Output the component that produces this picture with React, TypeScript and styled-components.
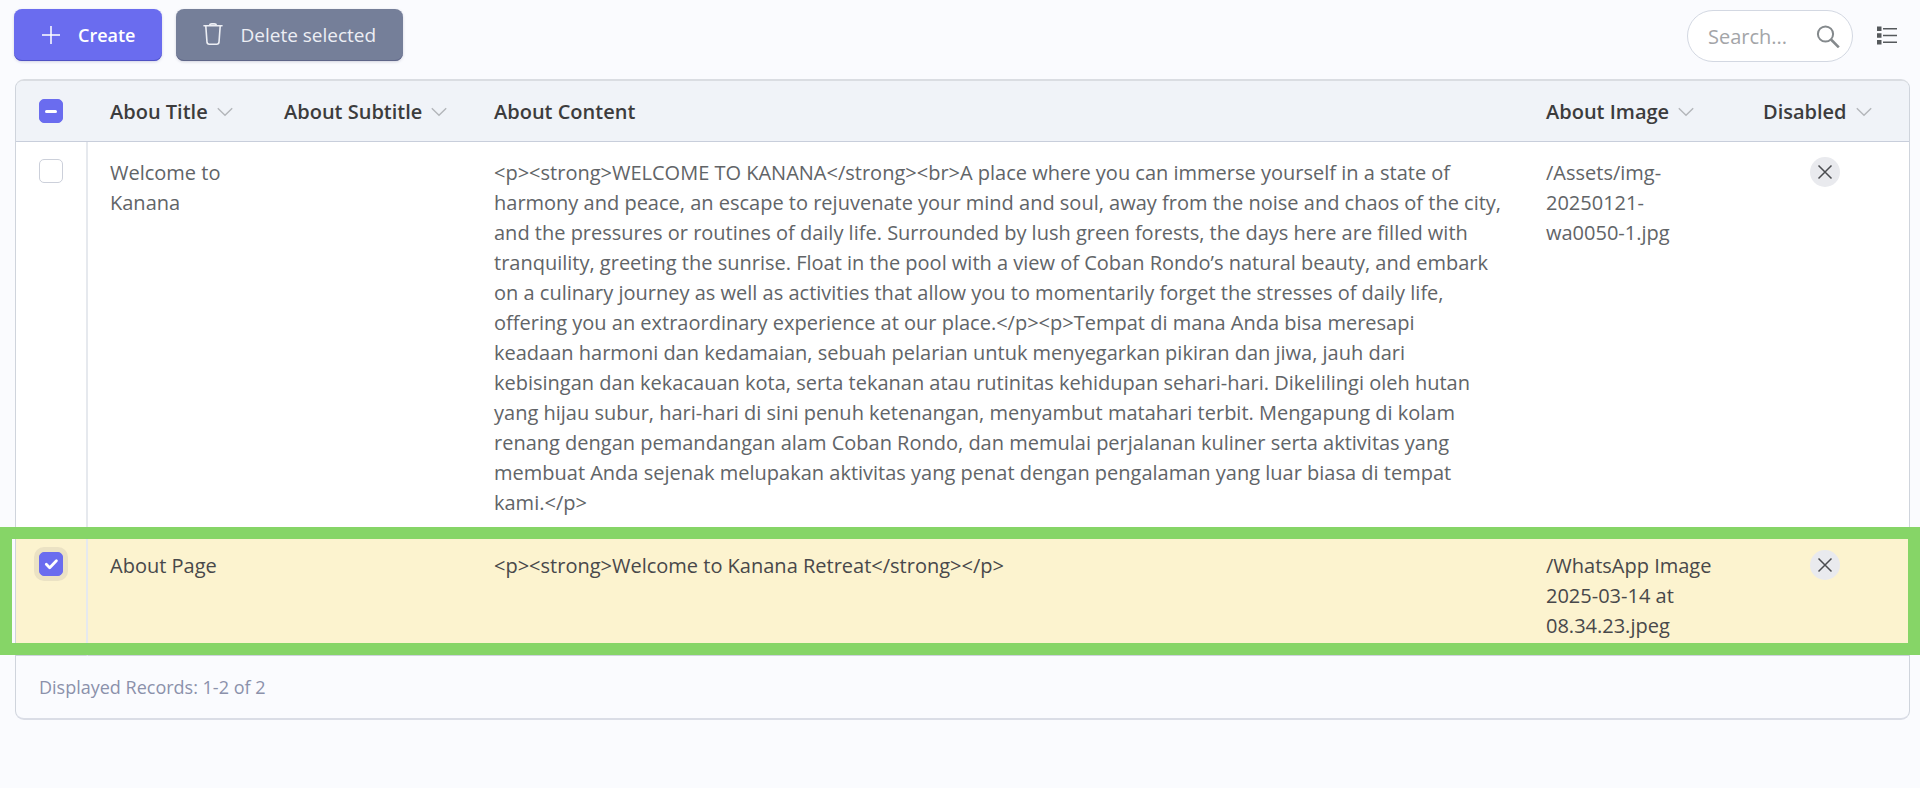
import React, { useState } from "react";
import styled, { createGlobalStyle, css } from "styled-components";

const GlobalStyle = createGlobalStyle`
  *, *::before, *::after { box-sizing: border-box; }
  body {
    margin: 0;
    background: #fafbfe;
    color: #616467;
    font-family: "Open Sans", "Noto Sans", sans-serif;
    font-size: 20px;
    line-height: 30px;
  }
  button, input { font: inherit; }
`;

const Page = styled.main`
  padding: 9px 10px 68px 14px;
  overflow-x: hidden;
`;

const Toolbar = styled.header`
  display: flex;
  align-items: flex-start;
  justify-content: space-between;
  margin-bottom: 17px;
`;

const Actions = styled.div`
  display: flex;
  gap: 14px;
`;

const ActionButton = styled.button<{ $tone: "primary" | "muted" }>`
  display: flex;
  align-items: center;
  gap: 17px;
  height: 52px;
  padding: 0 27px;
  border: 0;
  border-radius: 8px;
  white-space: nowrap;
  cursor: pointer;
  ${({ $tone }) =>
    $tone === "primary"
      ? css`
          background: #6a6cef;
          color: #fff;
          font-weight: 600;
          font-size: 18px;
          box-shadow: inset 0 -1px 0 #5052c4, 0 1px 3px rgba(60, 60, 140, 0.2);
        `
      : css`
          background: #757f99;
          color: #eceef4;
          font-size: 19px;
          box-shadow: inset 0 -1px 0 #5f6688, 0 1px 3px rgba(60, 60, 100, 0.2);
        `}
`;

const Tools = styled.div`
  display: flex;
  align-items: center;
  gap: 18px;
  padding: 1px 7px 0 0;
`;

const SearchBox = styled.label`
  display: flex;
  align-items: center;
  width: 166px;
  height: 52px;
  padding: 0 12px 0 20px;
  border: 1px solid #d3d8e2;
  border-radius: 26px;
  background: #fff;
  color: #84898c;
`;

const SearchInput = styled.input`
  flex: 1;
  min-width: 0;
  padding: 2px 0 0;
  border: 0;
  outline: 0;
  background: transparent;
  color: #616467;
  &::placeholder {
    color: #a3a5a8;
    opacity: 1;
  }
`;

const IconButton = styled.button`
  display: flex;
  padding: 6px;
  border: 0;
  background: transparent;
  color: #55595c;
  cursor: pointer;
`;

const Grid = styled.section`
  margin-left: 1px;
  border: 1px solid #cfd4dc;
  border-width: 2px 1px;
  border-top-color: #dadde2;
  border-bottom-color: #dadde6;
  border-radius: 9px;
`;

const Table = styled.table`
  width: 100%;
  border-spacing: 0;
  table-layout: fixed;
`;

const Column = styled.col<{ $width?: number }>`
  width: ${({ $width }) => ($width ? `${$width}px` : "auto")};
`;

const HeadCell = styled.th`
  height: 61px;
  padding: 1px 22px 0;
  border-bottom: 1px solid #c8cedb;
  background: #f0f3f8;
  color: #3c3c3d;
  font-weight: 600;
  font-size: 20px;
  text-align: left;
  white-space: nowrap;
  &:first-child {
    padding: 0 22px 1px 23px;
    border-top-left-radius: 7px;
  }
  &:last-child { border-top-right-radius: 7px; }
`;

const SortButton = styled.button`
  display: flex;
  align-items: center;
  gap: 9px;
  padding: 0;
  border: 0;
  background: transparent;
  color: inherit;
  cursor: pointer;
  svg { color: #b3b6ba; }
`;

const Cell = styled.td`
  padding: 16px 22px;
  border-bottom: 1px solid #ced3dc;
  vertical-align: top;
  white-space: pre-line;
  &:first-child {
    padding-left: 23px;
    border-right: 2px solid #e6e9ee;
  }
  tr:last-child > & { padding-bottom: 14px; }
`;

/* The frame is anchored to the row, and drawn from its first cell so that it adds no table column. */
const Row = styled.tr<{ $selected: boolean }>`
  background: #fff;
  ${({ $selected }) =>
    $selected &&
    css`
      position: relative;
      background: #fcf3cf;
      color: #48484a;
      > td:first-child::after {
        content: "";
        position: absolute;
        inset: -8px -11px 1px -16px;
        border: 12px solid #86d567;
        pointer-events: none;
      }
    `}
`;

const CheckLabel = styled.label`
  display: grid;
  width: 24px;
  height: 24px;
  margin-top: 1px;
  > * { grid-area: 1 / 1; }
  svg { pointer-events: none; }
`;

const HeadCheckLabel = styled(CheckLabel)`
  margin-top: 0;
`;

const CheckInput = styled.input<{ $filled: boolean; $ring?: boolean }>`
  appearance: none;
  width: 24px;
  height: 24px;
  margin: 0;
  border: 1px solid ${({ $filled }) => ($filled ? "#6a6cef" : "#ccd0da")};
  border-radius: 5px;
  background: ${({ $filled }) => ($filled ? "#6a6cef" : "#fff")};
  box-shadow: ${({ $ring }) => ($ring ? "0 0 0 5px #ebe2c4" : "none")};
`;

const Flag = styled.span`
  display: flex;
  align-items: center;
  justify-content: center;
  width: 30px;
  height: 30px;
  margin: -1px auto 0;
  border-radius: 50%;
  background: #e9eaee;
  color: #4a4c50;
`;

const Footer = styled.footer`
  padding: 16px 23px;
  color: #8b91ab;
  font-size: 18px;
`;

const PlusIcon = () => (
  <svg width="20" height="20" viewBox="0 0 20 20" fill="none" stroke="currentColor" strokeWidth="1.5" aria-hidden="true">
    <path d="M10 1v18M1 10h18" />
  </svg>
);

const TrashIcon = () => (
  <svg width="20" height="24" viewBox="0 0 20 24" fill="none" stroke="currentColor" strokeWidth="1.6" strokeLinecap="round" strokeLinejoin="round" aria-hidden="true">
    <path d="M1 2.8h18M6.4 2.6Q6.8 .9 8.6 .9h2.8q1.8 0 2.2 1.7M2.8 3l1.2 16.2q.2 2 2.2 2h7.6q2 0 2.2-2l1.2-16.2" />
  </svg>
);

const SearchIcon = () => (
  <svg width="24" height="24" viewBox="0 0 24 24" fill="none" stroke="currentColor" strokeWidth="2" aria-hidden="true">
    <circle cx="9.5" cy="10" r="7.6" />
    <path d="M15 15.5l7.8 7.8" strokeWidth="2.6" />
  </svg>
);

const ListIcon = () => (
  <svg width="20" height="20" viewBox="0 0 20 20" aria-hidden="true" fill="currentColor">
    <path d="M0 .5h4.5v4.5H0zM0 7.2h4.5v4.5H0zM0 14h4.5v4.5H0z" />
    <path d="M6 2.8h14M6 9.5h14M6 16.2h14" stroke="currentColor" strokeWidth="1.5" />
  </svg>
);

const ChevronIcon = () => (
  <svg width="16" height="10" viewBox="0 0 16 10" fill="none" stroke="currentColor" strokeWidth="1.4" aria-hidden="true">
    <path d="M.8 1.2L8 8.2l7.2-7" />
  </svg>
);

const CrossIcon = () => (
  <svg width="16" height="16" viewBox="0 0 16 16" fill="none" stroke="currentColor" strokeWidth="1.5" role="img" aria-label="No">
    <path d="M1.5 1.5l13 13M14.5 1.5l-13 13" />
  </svg>
);

const CheckMark = () => (
  <svg width="24" height="24" viewBox="0 0 24 24" fill="none" stroke="#fff" strokeWidth="2.8" strokeLinecap="round" strokeLinejoin="round" aria-hidden="true">
    <path d="M7.3 12.3l3.4 3.4 6.7-6.9" />
  </svg>
);

const DashMark = () => (
  <svg width="24" height="24" viewBox="0 0 24 24" fill="none" stroke="#fff" strokeWidth="3" strokeLinecap="round" aria-hidden="true">
    <path d="M7.5 12.5h9" />
  </svg>
);

const columns = [
  { title: "Abou Title", width: 174, sortable: true },
  { title: "About Subtitle", width: 210, sortable: true },
  { title: "About Content", sortable: false },
  { title: "About Image", width: 217, sortable: true },
  { title: "Disabled", width: 168, sortable: true },
];

const records = [
  {
    title: "Welcome to Kanana",
    subtitle: "",
    content:
      "<p><strong>WELCOME TO KANANA</strong><br>A place where you can immerse yourself in a state of harmony and peace, an escape to rejuvenate your mind and soul, away from the noise and chaos of the city, and the pressures or routines of daily life. Surrounded by lush green forests, the days here are filled with tranquility, greeting the sunrise. Float in the pool with a view of Coban Rondo’s natural beauty, and embark on a culinary journey as well as activities that allow you to momentarily forget the stresses of daily life, offering you an extraordinary experience at our place.</p><p>Tempat di mana Anda bisa meresapi\nkeadaan harmoni dan kedamaian, sebuah pelarian untuk menyegarkan pikiran dan jiwa, jauh dari kebisingan dan kekacauan kota, serta tekanan atau rutinitas kehidupan sehari-hari. Dikelilingi oleh hutan yang hijau subur, hari-hari di sini penuh ketenangan, menyambut matahari terbit. Mengapung di kolam renang dengan pemandangan alam Coban Rondo, dan memulai perjalanan kuliner serta aktivitas yang membuat Anda sejenak melupakan aktivitas yang penat dengan pengalaman yang luar biasa di tempat kami.</p>",
    image: "/Assets/img-20250121-wa0050-1.jpg",
  },
  {
    title: "About Page",
    subtitle: "",
    content: "<p><strong>Welcome to Kanana Retreat</strong></p>",
    image: "/WhatsApp Image 2025-03-14 at 08.34.23.jpeg",
  },
];

export default function App() {
  const [selected, setSelected] = useState<number[]>([1]);
  const [query, setQuery] = useState("");

  const toggle = (index: number) =>
    setSelected((now) => (now.includes(index) ? now.filter((i) => i !== index) : [...now, index]));
  const all = selected.length === records.length;
  const toggleAll = () => setSelected(all ? [] : records.map((_, i) => i));

  return (
    <Page>
      <GlobalStyle />
      <Toolbar>
        <Actions>
          <ActionButton type="button" $tone="primary">
            <PlusIcon />
            Create
          </ActionButton>
          <ActionButton type="button" $tone="muted">
            <TrashIcon />
            Delete selected
          </ActionButton>
        </Actions>
        <Tools>
          <SearchBox>
            <SearchInput
              aria-label="Search"
              placeholder="Search..."
              value={query}
              onChange={(e) => setQuery(e.target.value)}
            />
            <SearchIcon />
          </SearchBox>
          <IconButton type="button" aria-label="Choose columns">
            <ListIcon />
          </IconButton>
        </Tools>
      </Toolbar>

      <Grid>
        <Table>
          <colgroup>
            <Column $width={72} />
            {columns.map((c) => (
              <Column key={c.title} $width={c.width} />
            ))}
          </colgroup>
          <thead>
            <tr>
              <HeadCell>
                <HeadCheckLabel>
                  <CheckInput
                    type="checkbox"
                    aria-label="Select all records"
                    checked={all}
                    onChange={toggleAll}
                    $filled={selected.length > 0}
                  />
                  {all ? <CheckMark /> : selected.length > 0 && <DashMark />}
                </HeadCheckLabel>
              </HeadCell>
              {columns.map((c) => (
                <HeadCell key={c.title}>
                  {c.sortable ? (
                    <SortButton type="button">
                      {c.title}
                      <ChevronIcon />
                    </SortButton>
                  ) : (
                    c.title
                  )}
                </HeadCell>
              ))}
            </tr>
          </thead>
          <tbody>
            {records.map((r, i) => {
              const isSelected = selected.includes(i);
              return (
                <Row key={r.title} $selected={isSelected}>
                  <Cell>
                    <CheckLabel>
                      <CheckInput
                        type="checkbox"
                        aria-label={`Select ${r.title}`}
                        checked={isSelected}
                        onChange={() => toggle(i)}
                        $filled={isSelected}
                        $ring={isSelected}
                      />
                      {isSelected && <CheckMark />}
                    </CheckLabel>
                  </Cell>
                  <Cell>{r.title}</Cell>
                  <Cell>{r.subtitle}</Cell>
                  <Cell>{r.content}</Cell>
                  <Cell>{r.image}</Cell>
                  <Cell>
                    <Flag>
                      <CrossIcon />
                    </Flag>
                  </Cell>
                </Row>
              );
            })}
          </tbody>
        </Table>
        <Footer>Displayed Records: 1-2 of 2</Footer>
      </Grid>
    </Page>
  );
}
